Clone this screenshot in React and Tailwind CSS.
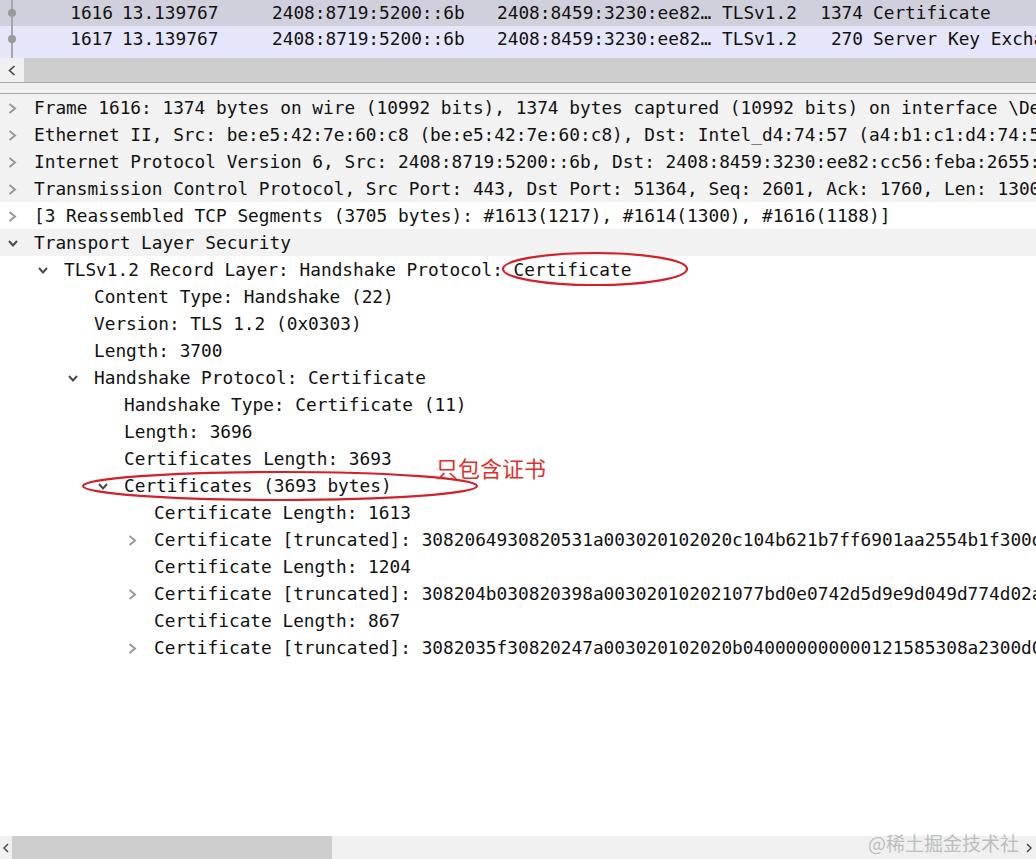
import React from "react";

const packets = [
  { no: "1616", time: "13.139767", src: "2408:8719:5200::6b", dst: "2408:8459:3230:ee82…", proto: "TLSv1.2", len: "1374", info: "Certificate", bg: "bg-[#d0d0dc]", h: "h-[26px]" },
  { no: "1617", time: "13.139767", src: "2408:8719:5200::6b", dst: "2408:8459:3230:ee82…", proto: "TLSv1.2", len: "270", info: "Server Key Exchange", bg: "bg-[#e6e6fa]", h: "h-[32px]" },
];

// state: "c" collapsed, "e" expanded, "" leaf
const tree = [
  { lv: 0, st: "c", bg: true, text: "Frame 1616: 1374 bytes on wire (10992 bits), 1374 bytes captured (10992 bits) on interface \\Device\\NPF_{6B2A}, id 0" },
  { lv: 0, st: "c", bg: true, text: "Ethernet II, Src: be:e5:42:7e:60:c8 (be:e5:42:7e:60:c8), Dst: Intel_d4:74:57 (a4:b1:c1:d4:74:57)" },
  { lv: 0, st: "c", bg: true, text: "Internet Protocol Version 6, Src: 2408:8719:5200::6b, Dst: 2408:8459:3230:ee82:cc56:feba:2655:3e1c" },
  { lv: 0, st: "c", bg: true, text: "Transmission Control Protocol, Src Port: 443, Dst Port: 51364, Seq: 2601, Ack: 1760, Len: 1300" },
  { lv: 0, st: "c", text: "[3 Reassembled TCP Segments (3705 bytes): #1613(1217), #1614(1300), #1616(1188)]" },
  { lv: 0, st: "e", bg: true, text: "Transport Layer Security" },
  { lv: 1, st: "e", text: "TLSv1.2 Record Layer: Handshake Protocol: Certificate" },
  { lv: 2, st: "", text: "Content Type: Handshake (22)" },
  { lv: 2, st: "", text: "Version: TLS 1.2 (0x0303)" },
  { lv: 2, st: "", text: "Length: 3700" },
  { lv: 2, st: "e", text: "Handshake Protocol: Certificate" },
  { lv: 3, st: "", text: "Handshake Type: Certificate (11)" },
  { lv: 3, st: "", text: "Length: 3696" },
  { lv: 3, st: "", text: "Certificates Length: 3693" },
  { lv: 3, st: "e", text: "Certificates (3693 bytes)" },
  { lv: 4, st: "", text: "Certificate Length: 1613" },
  { lv: 4, st: "c", text: "Certificate [truncated]: 3082064930820531a003020102020c104b621b7ff6901aa2554b1f300d06092a864886f70d" },
  { lv: 4, st: "", text: "Certificate Length: 1204" },
  { lv: 4, st: "c", text: "Certificate [truncated]: 308204b030820398a003020102021077bd0e0742d5d9e9d049d774d02a1d2c300d06092a86" },
  { lv: 4, st: "", text: "Certificate Length: 867" },
  { lv: 4, st: "c", text: "Certificate [truncated]: 3082035f30820247a003020102020b040000000000121585308a2300d06092a864886f70d" },
];

const indents = ["pl-0", "pl-[30px]", "pl-[60px]", "pl-[90px]", "pl-[120px]"];

function Chevron({ st }) {
  if (st === "c")
    return (
      <svg width="9" height="11" viewBox="0 0 9 11">
        <polyline points="1.5,1 7,5.5 1.5,10" fill="none" stroke="#999" strokeWidth="2" />
      </svg>
    );
  if (st === "e")
    return (
      <svg width="10" height="7" viewBox="0 0 10 7">
        <polyline points="1,1 5,5.5 9,1" fill="none" stroke="#4a4a4a" strokeWidth="2" />
      </svg>
    );
  return null;
}

export default function App() {
  return (
    <div
      className="relative w-[1036px] h-[859px] overflow-hidden flex flex-col bg-white text-[17.8px] text-[#111]"
      style={{ fontFamily: '"DejaVu Sans Mono", "Liberation Mono", monospace' }}
    >
      {/* packet list */}
      <div className="flex flex-col">
        {packets.map((p) => (
          <div key={p.no} className={`${p.bg} ${p.h} flex whitespace-nowrap leading-[26px]`}>
            <div className="relative w-[24px] shrink-0">
              <div className="absolute left-[11px] top-0 bottom-0 w-[2px] bg-[#a6a6a6]" />
              <div className="absolute left-[8px] top-[9px] w-[8px] h-[8px] rounded-full bg-[#9a9a9a]" />
            </div>
            <span className="w-[89px] shrink-0 text-right">{p.no}</span>
            <span className="ml-[9px] w-[150px] shrink-0">{p.time}</span>
            <span className="w-[225px] shrink-0">{p.src}</span>
            <span className="w-[225px] shrink-0">{p.dst}</span>
            <span className="w-[90px] shrink-0">{p.proto}</span>
            <span className="w-[51px] shrink-0 text-right">{p.len}</span>
            <span className="ml-[10px]">{p.info}</span>
          </div>
        ))}
      </div>

      {/* packet list horizontal scrollbar */}
      <div className="h-[24px] flex">
        <div className="w-[24px] bg-[#f0f0f0] flex items-center justify-center">
          <svg width="8" height="11" viewBox="0 0 8 11">
            <polyline points="6.5,1 1.5,5.5 6.5,10" fill="none" stroke="#444" strokeWidth="1.6" />
          </svg>
        </div>
        <div className="flex-1 bg-[#cdcdcd]" />
      </div>

      {/* splitter */}
      <div className="h-[12px] bg-[#f0f0f0] border-t border-b border-[#a8a8a8]" />

      {/* detail tree */}
      <div className="flex-1 flex flex-col whitespace-nowrap">
        {tree.map((r, i) => (
          <div key={i} className={`h-[27px] shrink-0 flex items-center pt-[1px] ${r.bg ? "bg-[#f2f2f2]" : "bg-white"} ${indents[r.lv]}`}>
            <div className="ml-[8px] w-[26px] shrink-0 flex items-center">
              <Chevron st={r.st} />
            </div>
            <span>{r.text}</span>
          </div>
        ))}
      </div>

      {/* bottom scrollbar */}
      <div className="h-[23px] flex bg-[#f0f0f0]">
        <div className="w-[12px] flex items-center justify-center">
          <svg width="6" height="10" viewBox="0 0 6 10">
            <polyline points="5,1 1,5 5,9" fill="none" stroke="#444" strokeWidth="1.4" />
          </svg>
        </div>
        <div className="w-[320px] bg-[#cdcdcd]" />
        <div className="flex-1" />
        <div className="w-[14px] flex items-center justify-center">
          <svg width="6" height="10" viewBox="0 0 6 10">
            <polyline points="1,1 5,5 1,9" fill="none" stroke="#444" strokeWidth="1.4" />
          </svg>
        </div>
      </div>

      {/* annotations */}
      <svg className="absolute left-0 top-0 pointer-events-none" width="1036" height="859">
        <ellipse cx="595" cy="269" rx="92" ry="16" fill="none" stroke="#d4202a" strokeWidth="2.2" />
        <ellipse cx="280" cy="486" rx="197" ry="14" fill="none" stroke="#d4202a" strokeWidth="2.2" />
      </svg>
      <div
        className="absolute left-[436px] top-[452px] text-[22px] leading-[30px] text-[#e0302c]"
        style={{ fontFamily: '"Noto Sans CJK SC", sans-serif' }}
      >
        只包含证书
      </div>
      <div
        className="absolute left-[868px] top-[830px] text-[19px] leading-[26px] text-[#bdbdbd]"
        style={{ fontFamily: '"Noto Sans CJK SC", sans-serif' }}
      >
        @稀土掘金技术社区
      </div>
    </div>
  );
}
